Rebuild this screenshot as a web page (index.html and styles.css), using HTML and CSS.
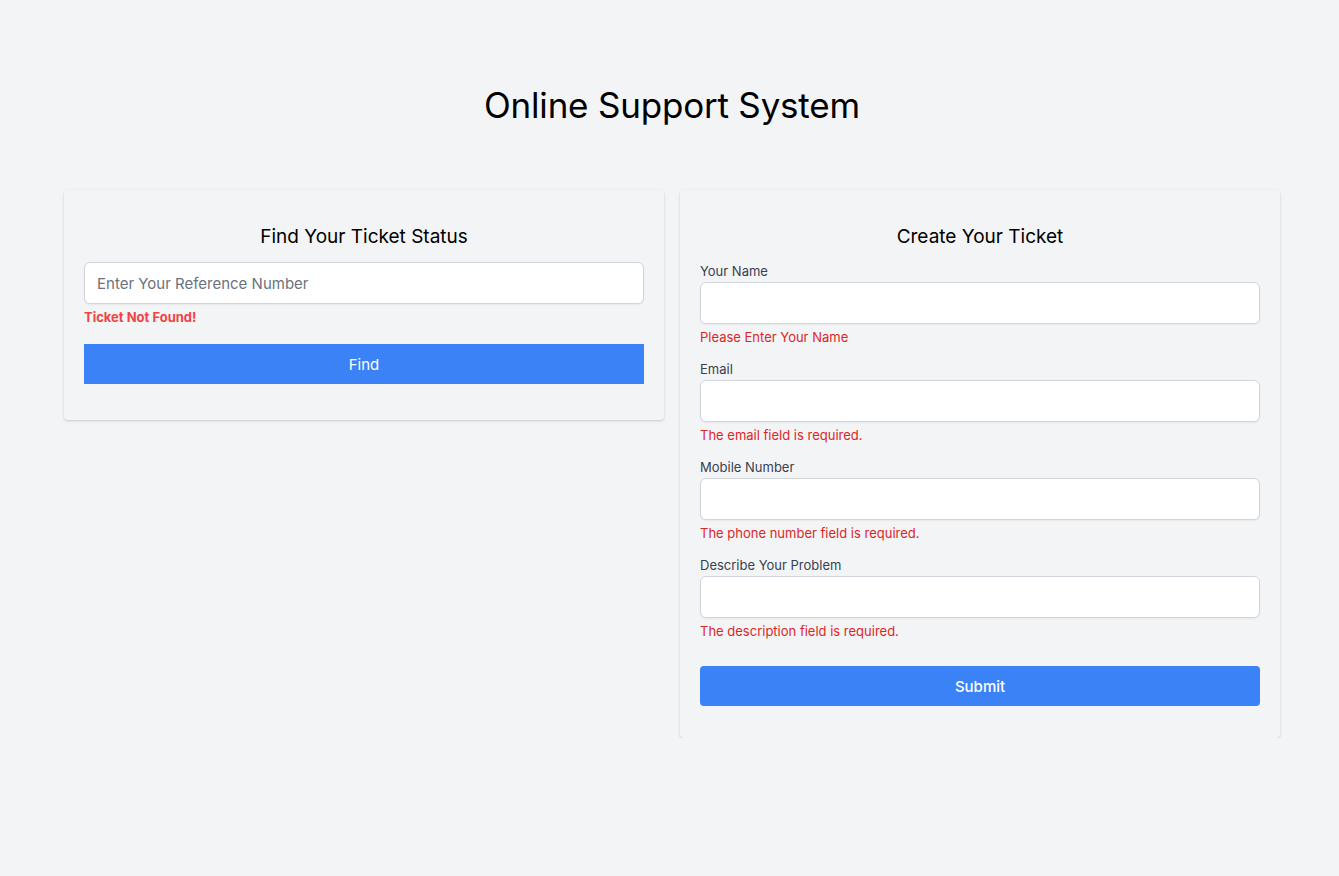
FILE: index.html
```html
<!DOCTYPE html>
<html lang="en">
<head>
<meta charset="utf-8">
<title>Online Support System</title>
<link rel="stylesheet" href="styles.css">
</head>
<body>
<main class="page">
  <h1 class="page-title">Online Support System</h1>
  <div class="cards">
    <section class="card">
      <h2 class="card-title">Find Your Ticket Status</h2>
      <input class="input" type="text" placeholder="Enter Your Reference Number">
      <p class="find-error">Ticket Not Found!</p>
      <button class="btn btn-find" type="button">Find</button>
    </section>
    <section class="card">
      <h2 class="card-title">Create Your Ticket</h2>
      <div class="fields">
        <div class="field">
          <label class="label">Your Name</label>
          <input class="input" type="text">
          <p class="error">Please Enter Your Name</p>
        </div>
        <div class="field">
          <label class="label">Email</label>
          <input class="input" type="text">
          <p class="error">The email field is required.</p>
        </div>
        <div class="field">
          <label class="label">Mobile Number</label>
          <input class="input" type="text">
          <p class="error">The phone number field is required.</p>
        </div>
        <div class="field">
          <label class="label">Describe Your Problem</label>
          <input class="input" type="text">
          <p class="error">The description field is required.</p>
        </div>
      </div>
      <button class="btn btn-submit" type="button">Submit</button>
    </section>
  </div>
</main>
</body>
</html>
```
FILE: styles.css
```css
* { box-sizing: border-box; }
body {
  margin: 0;
  background: #f3f4f6;
  font-family: Inter, "Noto Sans", sans-serif;
  color: #111;
}
.page {
  padding: 85px 0 0 64px;
}
.page-title {
  margin: 0 0 65px 0;
  width: 1216px;
  text-align: center;
  font-size: 35px;
  line-height: 40px;
  font-weight: 400;
  color: #000;
  letter-spacing: -0.2px;
}
.cards {
  display: grid;
  grid-template-columns: 600px 600px;
  gap: 16px;
  align-items: start;
}
.card {
  background: #f3f4f6;
  border-radius: 4px;
  box-shadow: 0 1px 3px rgba(0,0,0,0.12), 0 1px 2px rgba(0,0,0,0.06);
  padding: 33px 20px 36px;
  display: flex;
  flex-direction: column;
}
.card:last-child { padding-bottom: 32px; }
.card-title {
  margin: 0 0 11px;
  text-align: center;
  font-size: 19px;
  line-height: 28px;
  font-weight: 400;
  color: #000;
}
.input {
  display: block;
  width: 100%;
  height: 42px;
  border: 1px solid #d1d5db;
  border-radius: 6px;
  background: #fff;
  box-shadow: 0 1px 2px rgba(0,0,0,0.05);
  padding: 0 12px;
  font-family: inherit;
  font-size: 15px;
  color: #111;
}
.input::placeholder { color: #6b7280; }
.find-error {
  margin: 4px 0 0;
  font-size: 13px;
  line-height: 19px;
  font-weight: 700;
  color: #ef4444;
}
.btn {
  display: block;
  width: 100%;
  height: 40px;
  border: none;
  background: #3b82f6;
  color: #fff;
  font-family: inherit;
  font-size: 15px;
}
.btn-find {
  margin-top: 17px;
  border-radius: 0;
}
.fields {
  display: flex;
  flex-direction: column;
  gap: 13px;
}
.label {
  display: block;
  margin-bottom: 2px;
  font-size: 13px;
  line-height: 18px;
  color: #374151;
}
.error {
  margin: 3px 0 0;
  font-size: 13px;
  line-height: 20px;
  color: #dc2626;
}
.btn-submit {
  margin-top: 25px;
  border-radius: 4px;
  font-weight: 500;
}
```
